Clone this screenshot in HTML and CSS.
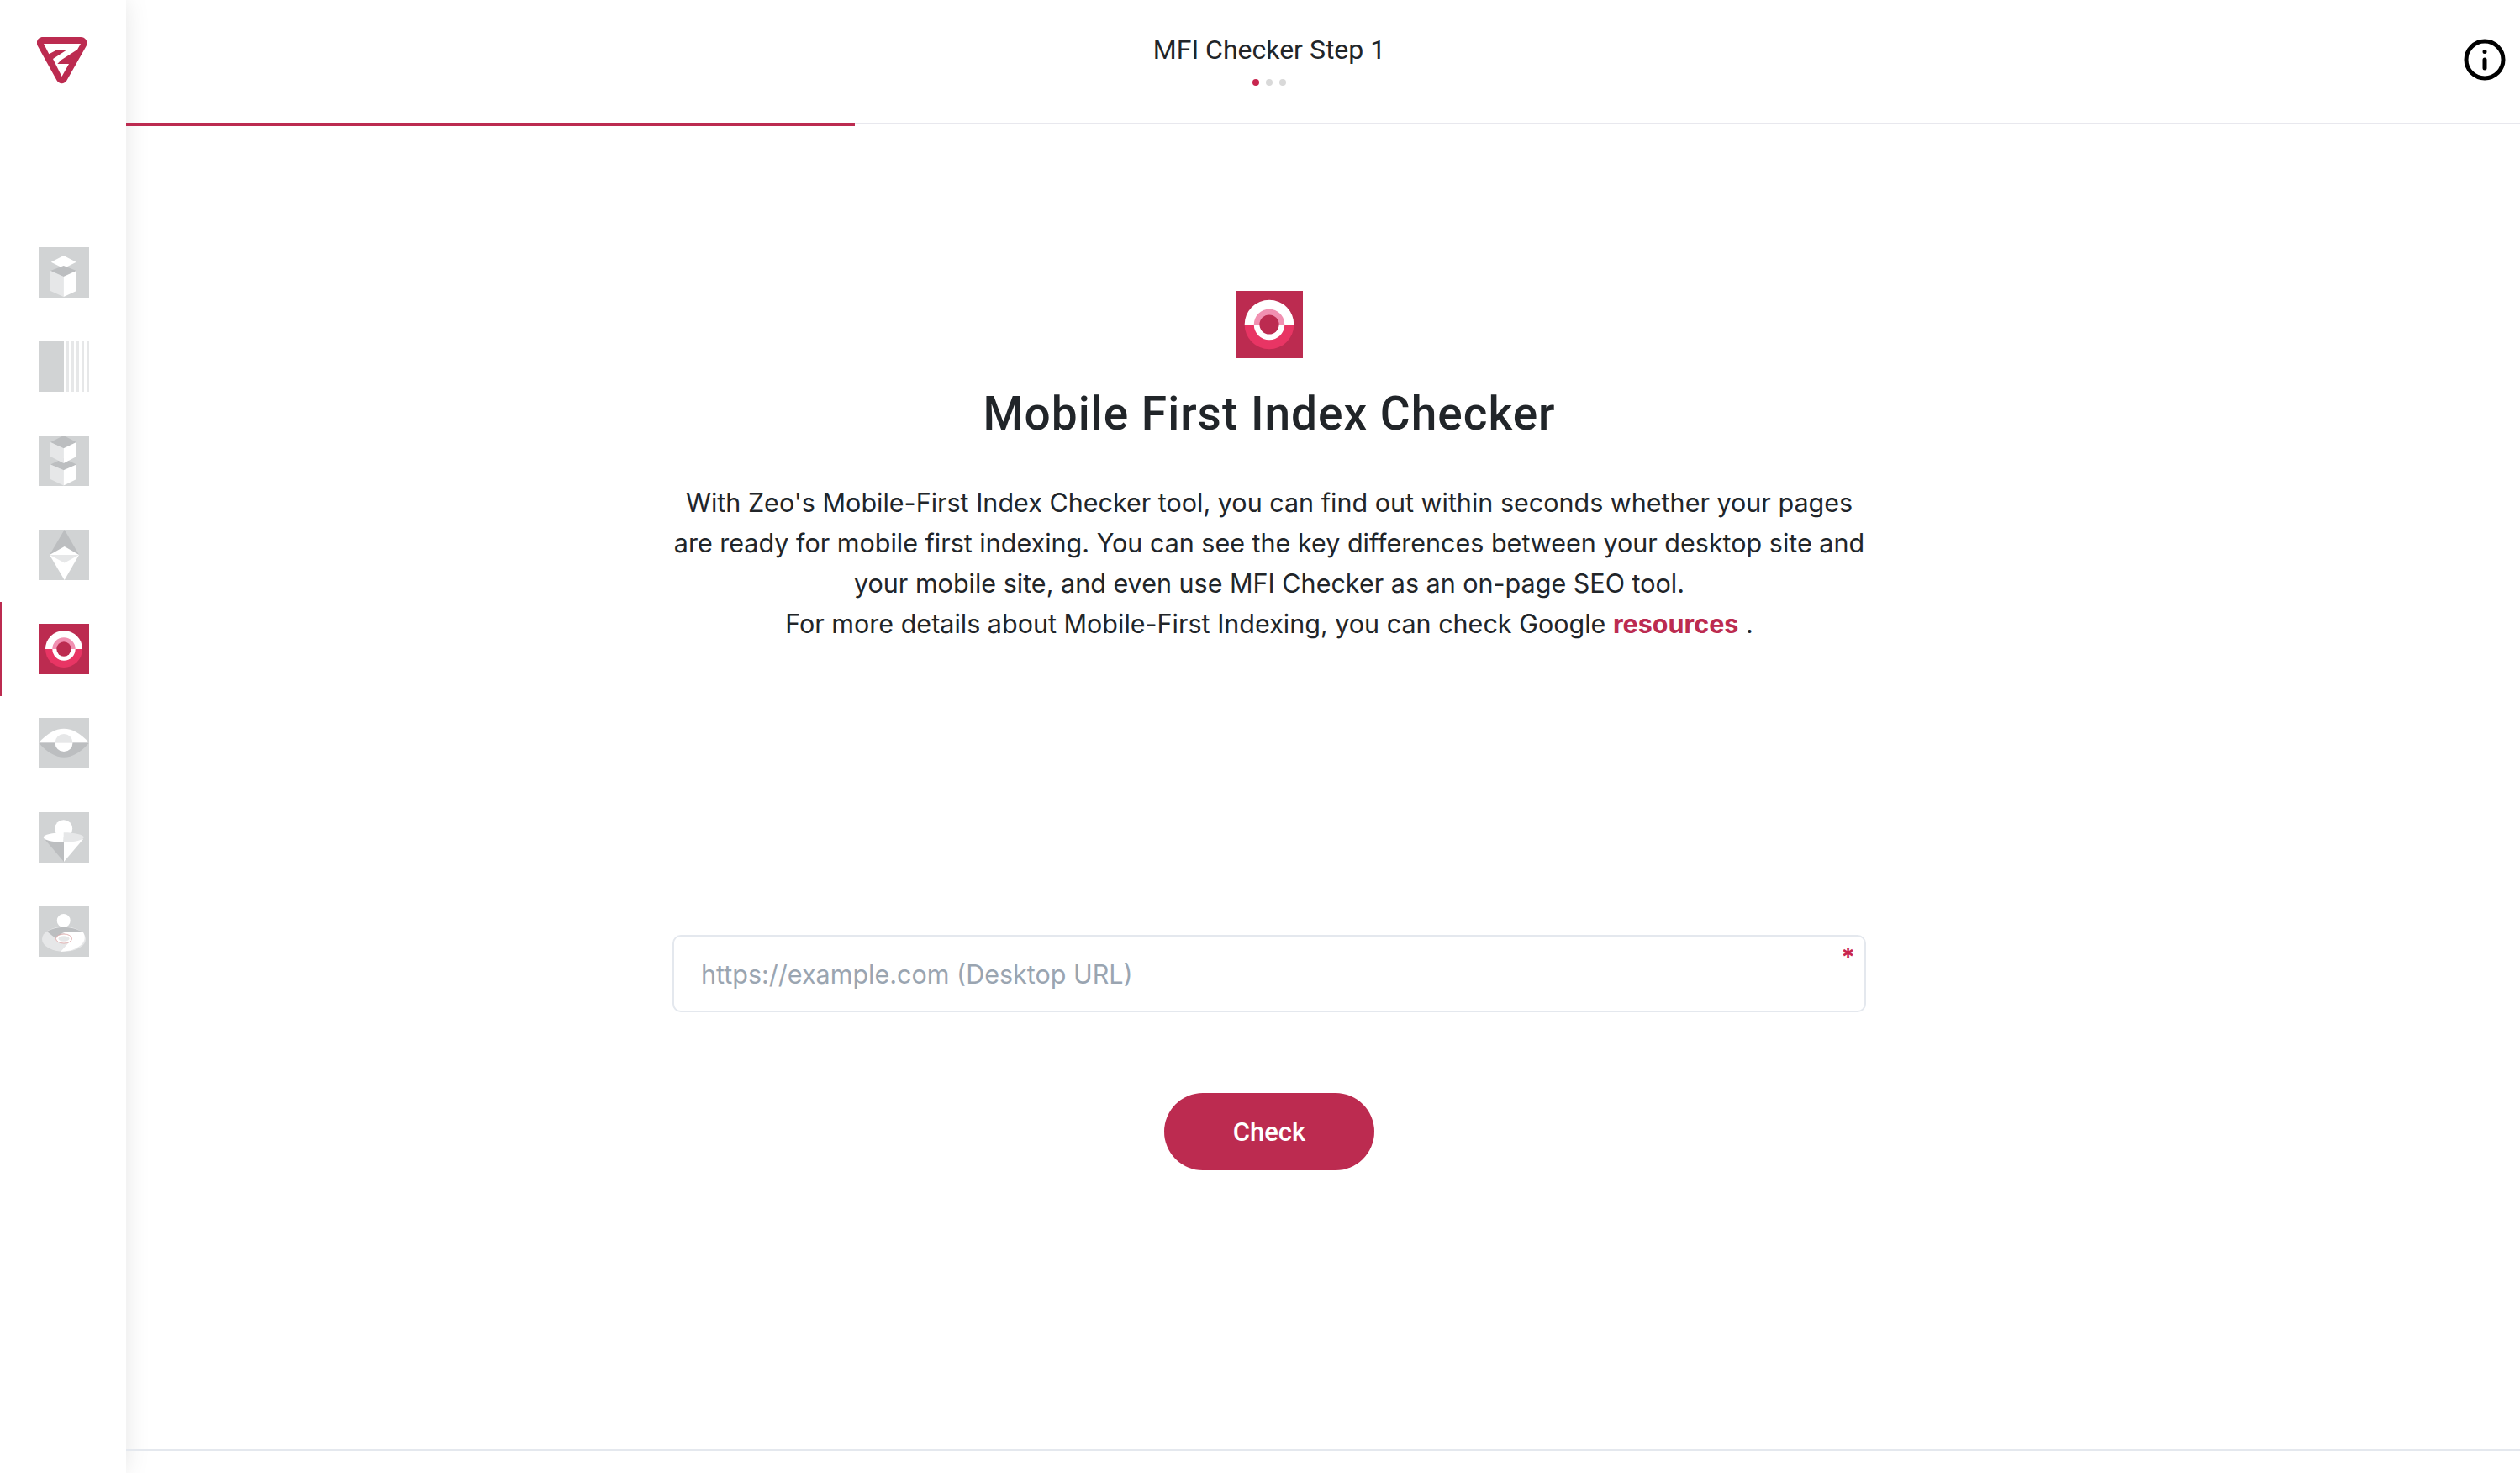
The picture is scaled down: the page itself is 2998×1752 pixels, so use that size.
FILE: index.html
```html
<!DOCTYPE html>
<html lang="en">
  <head>
    <meta charset="UTF-8" />
    <title>MFI Checker Step 1</title>
    <link rel="stylesheet" href="styles.css">
  </head>
  <body>
    <aside class="sidebar">
      <a class="logo" href="#">
        <svg width="60" height="56" viewBox="44 44 60 56">
          <path fill="#bc2b50" fill-rule="evenodd" d="M51 44H96C102 44 105.500 50 102.500 55L79.500 95.500C76.500 100.500 70.500 100.500 67.500 95.500L45 55C42 50 45 44 51 44ZM52 52L58.300 64.300 68.300 59H80L63 70 73.500 91 82 76H68.300L72.600 71.600 92 59 96 52Z"/>
        </svg>
      </a>
      <nav class="tools">
        <a class="tool" href="#">
          <svg class="tool-icon" viewBox="0 0 60 60">
            <rect width="60" height="60" fill="#d1d3d4"/>
            <path fill="#fff" d="M14.700 17.700 29.700 10 44.700 17.700 29.700 25.300Z"/>
            <path fill="#bcbec0" d="M14 28 29.700 22 45 28 29.700 35Z"/>
            <path fill="#e6e7e8" d="M14 28 29.700 35V59L14 52Z"/>
            <path fill="#fff" d="M45 28 29.700 35V59L45 52Z"/>
          </svg>
        </a>
        <a class="tool" href="#">
          <svg class="tool-icon" viewBox="0 0 60 60">
            <rect width="30" height="60" fill="#d1d3d4"/>
            <path fill="#e6e7e8" d="M33 0h3v60h-3zM39 0h3v60h-3zM45 0h3v60h-3zM51 0h3v60h-3zM57 0h3v60h-3z"/>
          </svg>
        </a>
        <a class="tool" href="#">
          <svg class="tool-icon" viewBox="0 0 60 60">
            <rect width="60" height="60" fill="#d1d3d4"/>
            <path fill="#bcbec0" d="M14 34.500 29.700 27 45 34.500 29.700 41.300Z"/>
            <path fill="#e6e7e8" d="M14 34.500 29.700 41.300V59.500L14 52Z"/>
            <path fill="#fff" d="M45 34.500 29.700 41.300V59.500L45 52Z"/>
            <path fill="#bcbec0" d="M14 8 29.700 0 45 8 29.700 15.300Z"/>
            <path fill="#e6e7e8" d="M14 8 29.700 15.300V33L14 25Z"/>
            <path fill="#fff" d="M45 8 29.700 15.300V33L45 25Z"/>
          </svg>
        </a>
        <a class="tool" href="#">
          <svg class="tool-icon" viewBox="0 0 60 60">
            <rect width="60" height="60" fill="#d1d3d4"/>
            <path fill="#bcbec0" d="M30.700 0 13 30H48Z"/>
            <path fill="#fff" d="M13 30 30.700 20 48 30 30.700 60Z"/>
            <path fill="#e6e7e8" d="M13 30H48L30.700 39.500Z"/>
          </svg>
        </a>
        <a class="tool tool-active" href="#">
          <svg class="tool-icon" viewBox="0 0 60 60">
            <rect width="60" height="60" fill="#bc2b50"/>
            <path fill="#fff" d="M8 30A22 22 0 0 1 52 30Z"/>
            <path fill="#e83564" d="M8 30A22 22 0 0 0 52 30Z"/>
            <path fill="#f190b1" d="M16.300 30A13.700 13.700 0 0 1 43.700 30Z"/>
            <path fill="#fff" d="M16.300 30A13.700 13.700 0 0 0 43.700 30Z"/>
            <circle cx="30" cy="30" r="8.700" fill="#bc2b50"/>
          </svg>
        </a>
        <a class="tool" href="#">
          <svg class="tool-icon" viewBox="0 0 60 60">
            <rect width="60" height="60" fill="#d1d3d4"/>
            <path fill="#fff" d="M0 29.500Q30-4 60 29.500Z"/>
            <path fill="#bcbec0" d="M0 29.500Q30 64 60 29.500Z"/>
            <path fill="#e6e7e8" d="M19.500 29.500A10.500 10.500 0 0 1 40.500 29.500Z"/>
            <path fill="#fff" d="M19.500 29.500A10.500 10.500 0 0 0 40.500 29.500Z"/>
          </svg>
        </a>
        <a class="tool" href="#">
          <svg class="tool-icon" viewBox="0 0 60 60">
            <rect width="60" height="60" fill="#d1d3d4"/>
            <circle cx="29.700" cy="19.700" r="10.500" fill="#fff"/>
            <path fill="#bcbec0" d="M7 32 30 59V33Z"/>
            <path fill="#fff" d="M53 32 30 59V33Z"/>
            <path fill="#fff" d="M29.700 24.300C16 24.300 5.700 27 5.700 30S16 35.700 29.700 35.700Z"/>
            <path fill="#e6e7e8" d="M29.700 24.300C43 24.300 53.700 27 53.700 30S43 35.700 29.700 35.700Z"/>
          </svg>
        </a>
        <a class="tool" href="#">
          <svg class="tool-icon" viewBox="0 0 60 60">
            <rect width="60" height="60" fill="#d1d3d4"/>
            <circle cx="29.700" cy="17" r="8" fill="#fff"/>
            <ellipse cx="30" cy="39" rx="26" ry="15" fill="#e6e7e8"/>
            <path fill="#bcbec0" d="M10 30C16 26.500 22 25 30 25S44 26.500 52 30.500H30L20 38Z"/>
            <path fill="#fff" d="M30 31H53C57 38 55 47 38 52.500L26 54 36 43Z"/>
            <ellipse cx="30" cy="38.500" rx="9.500" ry="5.500" fill="#fff" stroke="#d9a09f" stroke-width="0.800"/>
            <ellipse cx="30" cy="38.500" rx="6.500" ry="3.300" fill="#e6e7e8"/>
          </svg>
        </a>
      </nav>
    </aside>

    <main class="page">
      <header class="topbar">
        <div class="step">
          <div class="step-title">MFI Checker Step 1</div>
          <div class="step-dots">
            <span class="dot dot-on"></span>
            <span class="dot"></span>
            <span class="dot"></span>
          </div>
        </div>
        <svg class="info" width="50" height="50" viewBox="0 0 50 50" fill="none" stroke="#000" stroke-width="5" stroke-linecap="round">
          <circle cx="25" cy="25" r="22"/>
          <path d="M25 25V35"/>
          <circle cx="25" cy="15.500" r="1.500" fill="#000" stroke-width="2"/>
        </svg>
        <div class="progress"></div>
      </header>

      <section class="content">
        <svg class="hero-icon" viewBox="0 0 60 60">
          <rect width="60" height="60" fill="#bc2b50"/>
          <path fill="#fff" d="M8 30A22 22 0 0 1 52 30Z"/>
          <path fill="#e83564" d="M8 30A22 22 0 0 0 52 30Z"/>
          <path fill="#f190b1" d="M16.300 30A13.700 13.700 0 0 1 43.700 30Z"/>
          <path fill="#fff" d="M16.300 30A13.700 13.700 0 0 0 43.700 30Z"/>
          <circle cx="30" cy="30" r="8.700" fill="#bc2b50"/>
        </svg>
        <h1>Mobile First Index Checker</h1>
        <p class="intro">
          With Zeo's Mobile-First Index Checker tool, you can find out within seconds whether your pages<br>
          are ready for mobile first indexing. You can see the key differences between your desktop site and<br>
          your mobile site, and even use MFI Checker as an on-page SEO tool.<br>
          For more details about Mobile-First Indexing, you can check Google <a href="#">resources</a> .
        </p>
        <form class="check-form">
          <div class="field">
            <input type="text" placeholder="https://example.com (Desktop URL)" />
            <span class="required">*</span>
          </div>
          <button type="button">Check</button>
        </form>
      </section>

      <footer class="bottom"></footer>
    </main>
  </body>
</html>
```

FILE: styles.css
```css
html,
body {
  margin: 0;
  height: 100%;
}
body {
  display: flex;
  min-height: 100vh;
  background: #fff;
  color: #212529;
  font-family: Inter, "Liberation Sans", sans-serif;
  overflow: hidden;
}
a {
  text-decoration: none;
}

/* sidebar */
.sidebar {
  width: 150px;
  flex: none;
  background: #fff;
  box-shadow: 0 0 28px rgba(0, 0, 0, 0.1);
}
.logo {
  display: block;
  height: 268px;
  padding: 44px 0 0 44px;
  box-sizing: border-box;
}
.logo svg {
  display: block;
}
.tool {
  display: flex;
  align-items: center;
  height: 112px;
  padding-left: 46px;
  box-sizing: border-box;
}
.tool-active {
  border-left: 2px solid #bc2b50;
  padding-left: 44px;
}
.tool-icon {
  display: block;
  width: 60px;
  height: 60px;
}

/* main column */
.page {
  position: relative;
  z-index: 1;
  flex: 1;
  display: flex;
  flex-direction: column;
  min-width: 0;
}
.topbar {
  position: relative;
  display: flex;
  align-items: flex-start;
  justify-content: space-between;
  height: 148px;
  padding-right: 17px;
  box-sizing: border-box;
  border-bottom: 2px solid #e8e8ee;
  flex: none;
}
.step {
  width: 2720px;
  flex: none;
  padding-top: 40px;
  text-align: center;
}
.step-title {
  font-family: Roboto, sans-serif;
  font-size: 32px;
  line-height: 38px;
  color: #212529;
}
.step-dots {
  display: flex;
  justify-content: center;
  gap: 8px;
  margin-top: 16px;
}
.dot {
  width: 8px;
  height: 8px;
  border-radius: 50%;
  background: #d9d9d9;
}
.dot-on {
  background: #c8264f;
}
.info {
  margin-top: 46px;
  flex: none;
}
.progress {
  position: absolute;
  left: 0;
  bottom: -4px;
  width: 867px;
  height: 4px;
  background: #bc2b50;
}

.content {
  flex: 1;
  display: flex;
  flex-direction: column;
  align-items: center;
  padding-right: 128px;
  padding-top: 198px;
}
.hero-icon {
  display: block;
  width: 80px;
  height: 80px;
}
h1 {
  margin: 34px 0 0;
  font-family: Roboto, sans-serif;
  font-size: 55px;
  line-height: 64px;
  font-weight: 500;
  letter-spacing: 1px;
  color: #212529;
}
.intro {
  margin: 50px 0 0;
  font-size: 30.5px;
  line-height: 48px;
  text-align: center;
  color: #212529;
}
.intro a {
  color: #bc2b50;
  font-weight: 700;
}
.check-form {
  display: flex;
  flex-direction: column;
  align-items: center;
  margin-top: 346px;
}
.field {
  position: relative;
  width: 1420px;
}
.field input {
  display: block;
  width: 100%;
  height: 92px;
  padding: 0 32px;
  box-sizing: border-box;
  border: 2px solid #e4e8ee;
  border-radius: 10px;
  background: #fff;
  font-family: Inter, sans-serif;
  font-size: 30.5px;
  color: #212529;
  outline: none;
}
.field input::placeholder {
  color: #9aa5b1;
}
.required {
  position: absolute;
  top: 8px;
  right: 13px;
  font-size: 30px;
  line-height: 36px;
  font-weight: 700;
  color: #c8264f;
}
button {
  width: 250px;
  height: 92px;
  margin-top: 96px;
  border: none;
  border-radius: 46px;
  background: #bc2b50;
  color: #fff;
  font-family: Roboto, sans-serif;
  font-size: 31px;
  font-weight: 500;
  cursor: pointer;
}
.bottom {
  height: 26px;
  flex: none;
  border-top: 2px solid #e4e8ee;
}
```
